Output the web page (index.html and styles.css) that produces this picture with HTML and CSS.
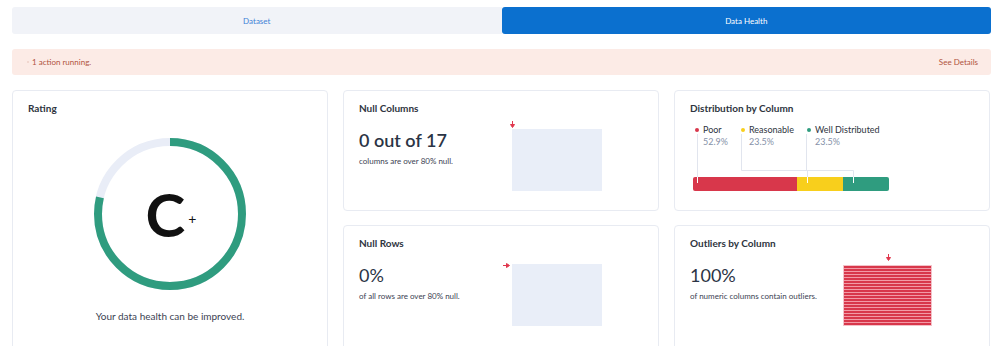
FILE: index.html
```html
<!DOCTYPE html>
<html lang="en">
<head>
    <meta charset="UTF-8">
    <title>Data Health</title>
    <link rel="stylesheet" href="styles.css">
</head>
<body>

<div class="page">
    <nav class="tabs">
        <button class="tab">Dataset</button>
        <button class="tab active">Data Health</button>
    </nav>

    <div class="alert">
        <span class="alert-text"><span class="spinner"></span>1 action running.</span>
        <a class="alert-link">See Details</a>
    </div>

    <div class="grid">
        <div class="card rating">
            <h3 class="card-title">Rating</h3>
            <div class="ring">
                <svg width="152" height="152" viewBox="0 0 152 152">
                    <circle cx="76" cy="76" r="72" fill="none" stroke="#e9edf7" stroke-width="8"/>
                    <circle cx="76" cy="76" r="72" fill="none" stroke="#2f9c7f" stroke-width="8"
                            stroke-dasharray="355.6 452.4" transform="rotate(-90 76 76)"/>
                </svg>
                <div class="grade"><span class="grade-letter">C</span><span class="grade-mod">+</span></div>
            </div>
            <p class="rating-note">Your data health can be improved.</p>
        </div>

        <div class="card">
            <h3 class="card-title">Null Columns</h3>
            <div class="stat">
                <div>
                    <div class="big strong">0 out of 17</div>
                    <div class="sub">columns are over 80% null.</div>
                </div>
                <div class="chart">
                    <svg class="marker down" width="5" height="7" viewBox="0 0 5 7"><path d="M2.5 0V4M0.5 3.5L2.5 6.5L4.5 3.5Z" stroke="#e0364d" fill="#e0364d"/></svg>
                    <div class="box"></div>
                </div>
            </div>
        </div>

        <div class="card">
            <h3 class="card-title">Distribution by Column</h3>
            <div class="dist">
                <div class="legend">
                    <div class="legend-item"><span class="dot red"></span><div><div class="legend-name">Poor</div><div class="legend-pct">52.9%</div></div></div>
                    <div class="legend-item"><span class="dot yellow"></span><div><div class="legend-name">Reasonable</div><div class="legend-pct">23.5%</div></div></div>
                    <div class="legend-item"><span class="dot green"></span><div><div class="legend-name">Well Distributed</div><div class="legend-pct">23.5%</div></div></div>
                </div>
                <div class="bar">
                    <span class="seg red" style="width: 104px"></span>
                    <span class="seg yellow" style="width: 46px"></span>
                    <span class="seg green" style="width: 46px"></span>
                </div>
                <svg class="leaders" width="200" height="70" viewBox="0 0 200 70">
                    <g fill="none" stroke="#e1e5ee" stroke-width="1">
                        <path d="M7.5 10V53"/>
                        <path d="M51.5 10V46.5H117.5V53"/>
                        <path d="M116.5 10V46.5H163.5V53"/>
                    </g>
                    <g stroke="#fff" stroke-width="1">
                        <path d="M7.5 53V59"/>
                        <path d="M117.5 53V59"/>
                        <path d="M163.5 53V59"/>
                    </g>
                </svg>
            </div>
        </div>

        <div class="card">
            <h3 class="card-title">Null Rows</h3>
            <div class="stat">
                <div>
                    <div class="big">0%</div>
                    <div class="sub">of all rows are over 80% null.</div>
                </div>
                <div class="chart">
                    <svg class="marker right" width="7" height="5" viewBox="0 0 7 5"><path d="M0 2.5H4M3.5 0.5L6.5 2.5L3.5 4.5Z" stroke="#e0364d" fill="#e0364d"/></svg>
                    <div class="box"></div>
                </div>
            </div>
        </div>

        <div class="card">
            <h3 class="card-title">Outliers by Column</h3>
            <div class="stat">
                <div>
                    <div class="big">100%</div>
                    <div class="sub">of numeric columns contain outliers.</div>
                </div>
                <div class="chart">
                    <svg class="marker mid" width="5" height="7" viewBox="0 0 5 7"><path d="M2.5 0V4M0.5 3.5L2.5 6.5L4.5 3.5Z" stroke="#e0364d" fill="#e0364d"/></svg>
                    <div class="box striped"></div>
                </div>
            </div>
        </div>
    </div>
</div>

</body>
</html>
```

FILE: styles.css
```css
* { box-sizing: border-box; }
body { margin: 0; font-family: Lato, "Open Sans", Arial, sans-serif; color: #2e3440; background: #fff; }
.page { padding: 7px 7px 0 12px; }

.tabs { display: flex; height: 27px; }
.tab { flex: 1; border: none; font-family: inherit; font-size: 8px; background-color: #f1f3f8; color: #3f82d6; border-radius: 3px 0 0 3px; }
.tab.active { background-color: #0b70cf; color: #fff; border-radius: 3px; }

.alert { display: flex; justify-content: space-between; align-items: center; height: 26px; margin-top: 15px; padding: 0 13px 0 15px; background-color: #fcebe6; color: #b0533e; font-size: 8px; border-radius: 3px; }
.alert-text { display: flex; align-items: center; }
.spinner { width: 2px; height: 2px; border-radius: 50%; background: #eed0c7; margin-right: 3px; }

.grid { display: grid; grid-template-columns: repeat(3, 316px); grid-template-rows: 121px 130px; gap: 14px 15px; margin-top: 15px; }
.card { border: 1px solid #e8ebf2; border-radius: 4px; padding: 10px 15px; }
.card-title { margin: 0; font-size: 10px; line-height: 14px; font-weight: 700; color: #2e3440; }

.rating { grid-row: span 2; display: flex; flex-direction: column; align-items: flex-start; }
.ring { display: grid; place-items: center; align-self: center; margin-top: 23px; }
.ring svg, .grade { grid-area: 1 / 1; }
.grade { display: flex; align-items: center; color: #111; margin-left: 2px; }
.grade-letter { font-size: 60px; line-height: 60px; font-weight: 700; }
.grade-mod { font-size: 14px; margin-left: 3px; margin-top: 8px; }
.rating-note { align-self: center; margin: 19px 0 0; font-size: 10px; line-height: 14px; color: #3b4252; }

.stat { display: grid; grid-template-columns: 153px 90px; margin-top: 14px; }
.big { font-size: 18px; line-height: 22px; color: #2b3445; }
.big.strong { font-weight: 600; }
.sub { margin-top: 4px; font-size: 8px; line-height: 12px; color: #3b4252; }
.chart { position: relative; }
.box { width: 90px; height: 62px; background-color: #e9eef8; }
.box.striped { width: 89px; height: 61px; margin-top: 1px; background: repeating-linear-gradient(#d8374b 0 2px, #f29aa6 2px 3px); border: 1px solid #f3c2c9; }
.marker { position: absolute; }
.marker.down { left: -2px; top: -8px; }
.marker.right { left: -9px; top: -1px; }
.marker.mid { left: 43px; top: -10px; }

.dist { position: relative; margin-top: 9px; }
.legend { display: flex; gap: 13px; padding-left: 5px; }
.legend-item { display: flex; gap: 4px; font-size: 9px; line-height: 12px; }
.legend-name { color: #2e3440; }
.legend-pct { color: #8691a8; }
.dot { width: 4px; height: 4px; border-radius: 50%; margin-top: 4px; }
.red { background-color: #d8374b; }
.yellow { background-color: #f8cf1c; }
.green { background-color: #2f9c7f; }
.bar { display: flex; width: 196px; height: 14px; margin: 29px 0 0 3px; border-radius: 2px; overflow: hidden; }
.leaders { position: absolute; left: 0; top: 0; }
```
